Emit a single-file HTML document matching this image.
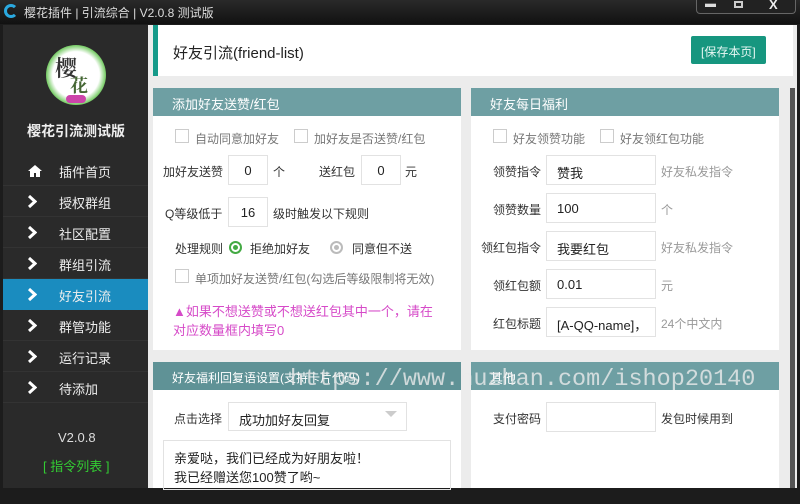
<!DOCTYPE html>
<html><head><meta charset="utf-8"><style>
*{margin:0;padding:0;box-sizing:border-box}
body{width:800px;height:504px;overflow:hidden;background:#1c1c1c;font-family:"Liberation Sans","Noto Sans CJK SC",sans-serif;font-size:12px;color:#333;position:relative}
.a{position:absolute;white-space:nowrap}
.side{left:3px;top:25px;width:145px;height:463px;background:#2a2a2a}
.main{left:148px;top:25px;width:649px;height:463px;background:#ececec}
.item{left:3px;width:145px;height:31px;color:#eee;font-size:13px;border-bottom:1px solid #333}
.item span{position:absolute;left:56px;top:7px}
.item svg{position:absolute;left:24px;top:9px}
.ph{height:28px;background:#6e9fa3;color:#fff;font-size:13px;padding:6px 0 0 19px}
.pb{background:#fff}
.cb{width:14px;height:14px;border:1px solid #ccc;background:#fff}
.inp{border:1px solid #e2e2e2;background:#fff;height:30px;font-size:13px;color:#222;padding:7px 0 0 10px}
.g{color:#999}
</style></head><body>
<div class="a" style="left:0;top:0;width:800px;height:24px;background:linear-gradient(#2a2a2a,#111)"></div>
<div class="a" style="left:4px;top:4px;width:14px;height:14px;border-radius:50%;border:3px solid #2aa9e0;border-right-color:transparent"></div>
<div class="a" style="left:24px;top:4px;color:#ddd;font-size:12px">樱花插件 | 引流综合 | V2.0.8 测试版</div>
<div class="a" style="left:696px;top:0;width:100px;height:14px;border:1px solid #666;border-top:none;border-radius:0 0 4px 4px;background:#222"></div>
<div class="a" style="left:705px;top:-2px;color:#ddd;font-size:11px">▬</div>
<div class="a" style="left:734px;top:1px;width:9px;height:7px;border:2px solid #ccc"></div>
<div class="a" style="left:769px;top:-3px;color:#eee;font-size:13px;font-weight:bold">X</div>
<div class="a side"></div>
<div class="a" style="left:46px;top:45px;width:60px;height:60px;border-radius:50%;background:radial-gradient(circle,#fff 55%,#7c6 70%,#c4a 85%,#fff 100%)"></div>
<div class="a" style="left:55px;top:52px;font-size:22px;color:#333;font-family:'Noto Serif CJK SC',serif;font-weight:bold">樱</div>
<div class="a" style="left:70px;top:72px;font-size:18px;color:#463;font-family:'Noto Serif CJK SC',serif;font-weight:bold">花</div>
<div class="a" style="left:66px;top:95px;width:20px;height:8px;border-radius:4px;background:#c4a"></div>
<div class="a" style="left:27px;top:121px;color:#eee;font-size:14px;font-weight:bold">樱花引流测试版</div>
<div class="a item" style="top:155px"><svg width="16" height="13" viewBox="0 0 16 13"><path d="M8 1L1 7h2v6h4V9h2v4h4V7h2z" fill="#fff"/></svg><span>插件首页</span></div>
<div class="a item" style="top:186px"><svg width="10" height="13"><path d="M2 1l6 5.5L2 12" stroke="#fff" stroke-width="3" fill="none"/></svg><span>授权群组</span></div>
<div class="a item" style="top:217px"><svg width="10" height="13"><path d="M2 1l6 5.5L2 12" stroke="#fff" stroke-width="3" fill="none"/></svg><span>社区配置</span></div>
<div class="a item" style="top:248px"><svg width="10" height="13"><path d="M2 1l6 5.5L2 12" stroke="#fff" stroke-width="3" fill="none"/></svg><span>群组引流</span></div>
<div class="a item" style="top:279px;background:#1a8cbf;border:none"><svg width="10" height="13"><path d="M2 1l6 5.5L2 12" stroke="#fff" stroke-width="3" fill="none"/></svg><span>好友引流</span></div>
<div class="a item" style="top:310px"><svg width="10" height="13"><path d="M2 1l6 5.5L2 12" stroke="#fff" stroke-width="3" fill="none"/></svg><span>群管功能</span></div>
<div class="a item" style="top:341px"><svg width="10" height="13"><path d="M2 1l6 5.5L2 12" stroke="#fff" stroke-width="3" fill="none"/></svg><span>运行记录</span></div>
<div class="a item" style="top:372px"><svg width="10" height="13"><path d="M2 1l6 5.5L2 12" stroke="#fff" stroke-width="3" fill="none"/></svg><span>待添加</span></div>
<div class="a" style="left:58px;top:430px;color:#ddd;font-size:13px">V2.0.8</div>
<div class="a" style="left:43px;top:456px;color:#3c3;font-size:13px">[ 指令列表 ]</div>
<div class="a main"></div>
<div class="a" style="left:153px;top:25px;width:640px;height:51px;background:#fff;border-left:5px solid #169a8a"></div>
<div class="a" style="left:173px;top:42px;font-size:15px;color:#222">好友引流(friend-list)</div>
<div class="a" style="left:691px;top:36px;width:75px;height:28px;background:#16967f;color:#e8f8f4;font-size:12px;padding:7px 0 0 10px;border-radius:2px">[保存本页]</div>
<div class="a" style="left:790px;top:88px;width:5px;height:400px;background:#555"></div>
<div class="a ph" style="left:153px;top:88px;width:308px">添加好友送赞/红包</div>
<div class="a pb" style="left:153px;top:116px;width:308px;height:234px"></div>
<div class="a cb" style="left:175px;top:129px"></div><div class="a" style="left:195px;top:130px;color:#777">自动同意加好友</div>
<div class="a cb" style="left:294px;top:129px"></div><div class="a" style="left:314px;top:130px;color:#777">加好友是否送赞/红包</div>
<div class="a" style="left:163px;top:163px">加好友送赞</div>
<div class="a inp" style="left:228px;top:155px;width:40px;text-align:center;padding-left:0">0</div>
<div class="a" style="left:273px;top:163px">个</div>
<div class="a" style="left:319px;top:163px">送红包</div>
<div class="a inp" style="left:361px;top:155px;width:40px;text-align:center;padding-left:0">0</div>
<div class="a" style="left:405px;top:163px">元</div>
<div class="a" style="left:165px;top:205px">Q等级低于</div>
<div class="a inp" style="left:228px;top:197px;width:40px;text-align:center;padding-left:0">16</div>
<div class="a" style="left:273px;top:205px">级时触发以下规则</div>
<div class="a" style="left:175px;top:240px">处理规则</div>
<div class="a" style="left:229px;top:241px;width:13px;height:13px;border-radius:50%;border:2px solid #4a4"><div style="margin:2px;width:5px;height:5px;border-radius:50%;background:#4a4"></div></div>
<div class="a" style="left:250px;top:240px">拒绝加好友</div>
<div class="a" style="left:330px;top:241px;width:13px;height:13px;border-radius:50%;border:2px solid #bbb"><div style="margin:2px;width:5px;height:5px;border-radius:50%;background:#bbb"></div></div>
<div class="a" style="left:352px;top:240px">同意但不送</div>
<div class="a cb" style="left:175px;top:269px"></div><div class="a" style="left:195px;top:270px;color:#777">单项加好友送赞/红包(勾选后等级限制将无效)</div>
<div class="a" style="left:173px;top:302px;color:#d64ac8;line-height:19px;white-space:normal;width:265px;font-size:13px">▲如果不想送赞或不想送红包其中一个，请在对应数量框内填写0</div>
<div class="a ph" style="left:471px;top:88px;width:308px">好友每日福利</div>
<div class="a pb" style="left:471px;top:116px;width:308px;height:234px"></div>
<div class="a cb" style="left:493px;top:129px"></div><div class="a" style="left:513px;top:130px;color:#777">好友领赞功能</div>
<div class="a cb" style="left:600px;top:129px"></div><div class="a" style="left:620px;top:130px;color:#777">好友领红包功能</div>
<div class="a" style="left:493px;top:163px">领赞指令</div><div class="a inp" style="left:546px;top:155px;width:110px">赞我</div><div class="a g" style="left:661px;top:163px">好友私发指令</div>
<div class="a" style="left:493px;top:201px">领赞数量</div><div class="a inp" style="left:546px;top:193px;width:110px">100</div><div class="a g" style="left:661px;top:201px">个</div>
<div class="a" style="left:481px;top:239px">领红包指令</div><div class="a inp" style="left:546px;top:231px;width:110px">我要红包</div><div class="a g" style="left:661px;top:239px">好友私发指令</div>
<div class="a" style="left:493px;top:277px">领红包额</div><div class="a inp" style="left:546px;top:269px;width:110px">0.01</div><div class="a g" style="left:661px;top:277px">元</div>
<div class="a" style="left:493px;top:315px">红包标题</div><div class="a inp" style="left:546px;top:307px;width:110px;overflow:hidden">[A-QQ-name]，</div><div class="a g" style="left:661px;top:315px">24个中文内</div>
<div class="a ph" style="left:153px;top:362px;width:308px;background:#5f9296;font-size:12px;padding-top:7px">好友福利回复语设置(支持卡片代码)</div>
<div class="a pb" style="left:153px;top:390px;width:308px;height:98px"></div>
<div class="a" style="left:174px;top:410px">点击选择</div>
<div class="a inp" style="left:228px;top:402px;width:179px;height:29px">成功加好友回复</div>
<div class="a" style="left:385px;top:411px;width:0;height:0;border-left:6px solid transparent;border-right:6px solid transparent;border-top:6px solid #ccc"></div>
<div class="a" style="left:163px;top:440px;width:288px;height:50px;border:1px solid #e2e2e2;padding:8px 0 0 10px;line-height:19px;color:#222;font-size:13px">亲爱哒，我们已经成为好朋友啦！<br>我已经赠送您100赞了哟~</div>
<div class="a ph" style="left:471px;top:362px;width:308px">其他</div>
<div class="a pb" style="left:471px;top:390px;width:308px;height:98px"></div>
<div class="a" style="left:493px;top:410px">支付密码</div>
<div class="a inp" style="left:546px;top:402px;width:110px"></div>
<div class="a" style="left:661px;top:410px">发包时候用到</div>
<div class="a" style="left:290px;top:366px;font-family:'Liberation Mono',monospace;font-size:23.5px;color:rgba(235,235,235,.8)">https://www.huzhan.com/ishop20140</div>
</body></html>
